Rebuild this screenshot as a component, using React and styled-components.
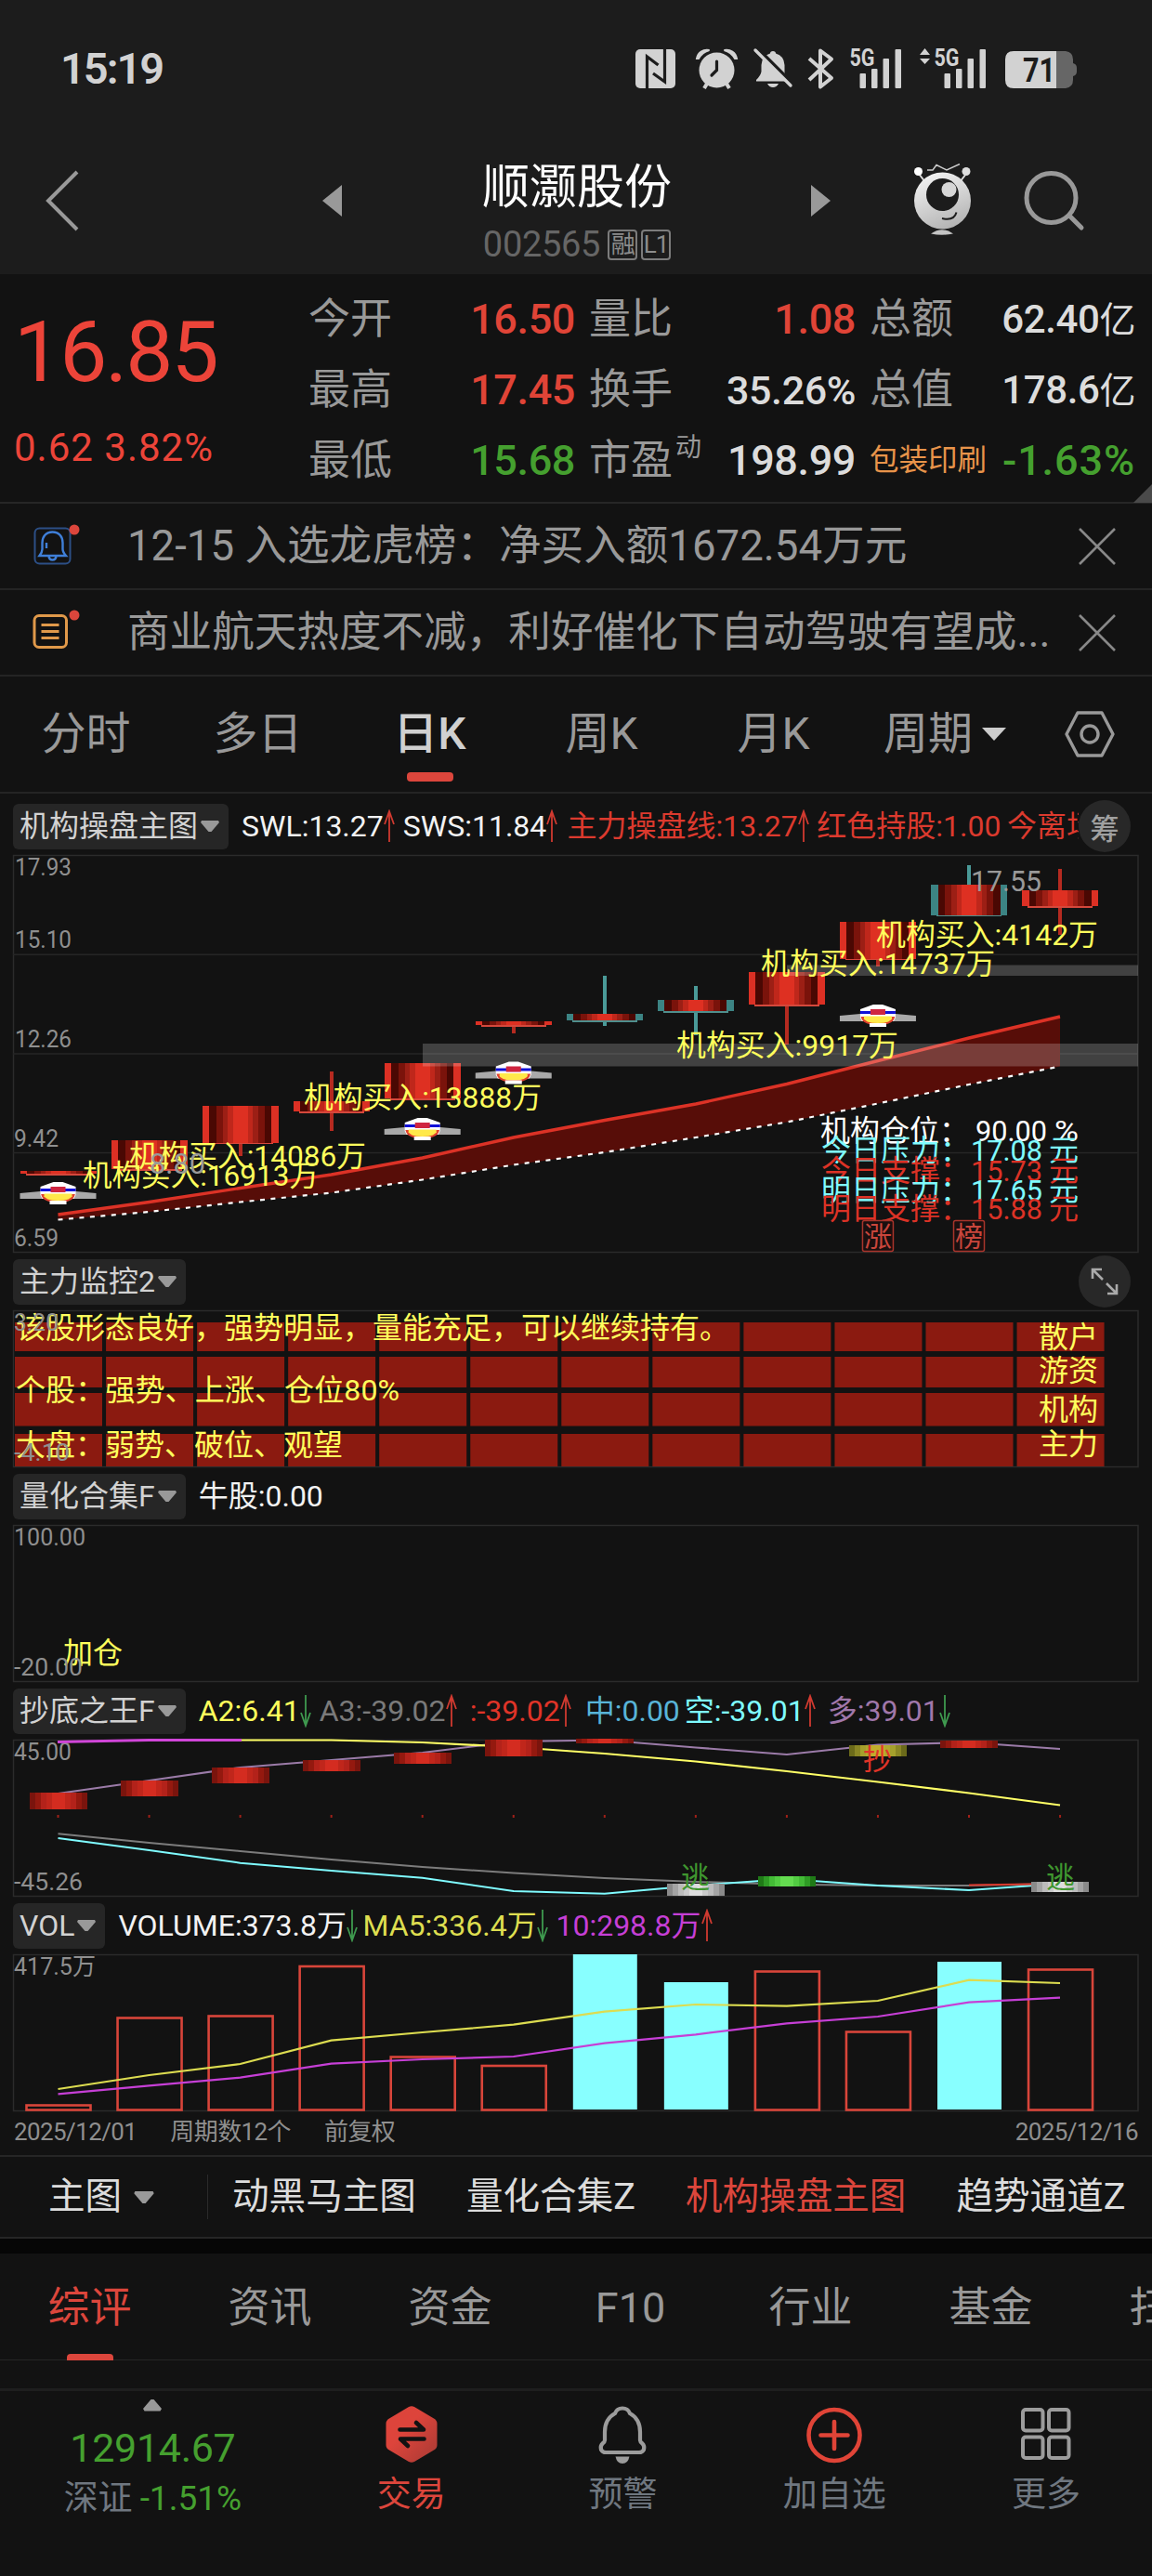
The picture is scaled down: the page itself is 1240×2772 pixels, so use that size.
import React from "react";
import styled, { createGlobalStyle } from "styled-components";

const RED = "#e04437";
const GREEN = "#45a02f";
const GREY = "#999999";
const LIGHT = "#dcdcdc";
const YELLOW = "#ffff5c";
const CYAN = "#7ffbff";

// x position of every trading day, shared by all panels
const DAYS = Array.from({ length: 12 }, (_, i) => 62.5 + i * 98.05);

const points = (values) =>
  values.map((y, i) => `${DAYS[i].toFixed(1)},${y}`).join(" ");

const quotes = [
  ["今开", "16.50", RED, 45, "量比", "1.08", RED, 45, "总额", "62.40", "亿"],
  ["最高", "17.45", RED, 45, "换手", "35.26%", LIGHT, 43, "总值", "178.6", "亿"],
];

const Label = ({ x, y, w, size = 32, fill = YELLOW, children, ...rest }) => (
  <text
    x={x}
    y={y}
    fontSize={size}
    fill={fill}
    textLength={w}
    lengthAdjust="spacingAndGlyphs"
    {...rest}
  >
    {children}
  </text>
);

const Axis = (props) => <Label size={26} fill="#8f8f8f" {...props} />;

const Arrow = ({ down }) => (
  <svg width="12" height="36" viewBox="0 0 12 36" fill="none">
    <path
      d={down ? "M6 1V34M1 20L6 34L11 20" : "M6 35V2M1 16L6 2L11 16"}
      stroke={down ? "#3f9a4f" : "#d03a30"}
      strokeWidth="1.8"
    />
  </svg>
);

const Caret = ({ w = 22, h = 14, fill = GREY }) => (
  <svg width={w} height={h} viewBox="0 0 22 14">
    <path d="M2 1H20L21 3L12.5 13H9.5L1 3Z" fill={fill} />
  </svg>
);

const Close = () => (
  <svg width="40" height="40" viewBox="0 0 40 40">
    <path d="M1 1L39 39M39 1L1 39" stroke="#888" strokeWidth="2.6" />
  </svg>
);

const StatusIcons = () => (
  <svg width="500" height="90" viewBox="0 0 500 90" fill="#d2d2d2">
    <rect x="14" y="23" width="43" height="42" rx="5" />
    <path
      d="M26.5 65V31L38.500 40M45.500 23V58L33 49"
      fill="none"
      stroke="#1c1c1c"
      strokeWidth="3.2"
    />
    <circle cx="101.500" cy="45.500" r="19" />
    <path d="M80 33A11 11 0 0 1 93.500 24Q86 26 82 33ZM123 33A11 11 0 0 0 109.500 24Q117 26 121 33Z" stroke="#d2d2d2" strokeWidth="2" />
    <path d="M91 60L88 65M112 60L115 65" stroke="#d2d2d2" strokeWidth="4" />
    <path
      d="M101.500 36V45.500L96 51"
      fill="none"
      stroke="#1c1c1c"
      strokeWidth="3.2"
      strokeLinecap="round"
    />
    <path d="M162 25Q165 25 165 27.500Q174 30 174.500 40V49Q175 52 180 56V57.500H144V56Q149 51 149.500 47V40Q150 30 159 27.500Q159 25 162 25ZM156 60H168Q166 64 162 64Q158 64 156 60Z" />
    <path d="M145 22L186 63" stroke="#1c1c1c" strokeWidth="4" />
    <path d="M143 24L181 62" stroke="#d2d2d2" strokeWidth="3.4" strokeLinecap="round" />
    <path
      d="M201 33L225 54L213 63.500V24.500L225 33.500L201 56"
      fill="none"
      stroke="#d2d2d2"
      strokeWidth="4"
      strokeLinejoin="round"
    />
    <text x="244.500" y="40.500" fontSize="25" fontWeight="700" textLength="27" lengthAdjust="spacingAndGlyphs">5G</text>
    <text x="335.500" y="40.500" fontSize="25" fontWeight="700" textLength="27" lengthAdjust="spacingAndGlyphs">5G</text>
    {[0, 91].map((dx) => (
      <g key={dx}>
        <rect x={255.5 + dx} y="49" width="6.500" height="16" rx="1" />
        <rect x={268 + dx} y="44" width="6.500" height="21" rx="1" />
        <rect x={280.5 + dx} y="33" width="6.500" height="32" rx="1" />
        <rect x={293.5 + dx} y="23" width="6.500" height="42" rx="1" />
      </g>
    ))}
    <path d="M325.500 22L331 29H320ZM325.500 39L331 33H320Z" />
    <path d="M467 25H477Q485 26 485 34V38Q489 39 489 43V47Q489 51 485 52V56Q485 64 477 65H467Z" fill="#666" />
    <path d="M421 25H467V65H421Q412 65 412 56V34Q412 25 421 25Z" />
    <text x="431" y="58" fontSize="37" fontWeight="700" fill="#1c1c1c" textLength="35" lengthAdjust="spacingAndGlyphs">71</text>
  </svg>
);

const Robot = () => (
  <svg width="64" height="80" viewBox="0 0 64 80">
    <defs>
      <linearGradient id="shell" x1="0.200" y1="0" x2="0.600" y2="1">
        <stop offset="0" stopColor="#f4f4f4" />
        <stop offset="1" stopColor="#b4b4b4" />
      </linearGradient>
    </defs>
    <path d="M6 11L13 20M57 11L50 20" stroke="#ddd" strokeWidth="2" />
    <circle cx="5.500" cy="8.500" r="4.500" fill="#fff" />
    <circle cx="57" cy="8.500" r="4.500" fill="#ddd" />
    <path d="M15 7H21L25 1.500L36 7L50 0.500" fill="none" stroke="#ccc" strokeWidth="1.500" />
    <circle cx="31.500" cy="40" r="30.500" fill="url(#shell)" />
    <circle cx="31.500" cy="33.500" r="17.500" fill="#1c1c1c" />
    <circle cx="38.500" cy="28" r="8" fill="#d6d6d6" />
    <path d="M31 59Q44 62 46.500 52.500" fill="none" stroke="#1c1c1c" strokeWidth="2" />
    <path d="M19 75.500Q31 67 43 75.500Q31 78 19 75.500Z" fill="#c4c4c4" />
  </svg>
);

const STRIPES = [
  [26, 7.5, "#4a0803"],
  [19, 7, "#7a130b"],
  [13.5, 5.5, "#9c1f15"],
  [8, 5.5, "#bf271b"],
];

const Candle = ({ x, top, bottom, high, low, teal }) => {
  const edge = teal ? "#3c8484" : "#dc3024";
  const h = bottom - top;
  return (
    <g shapeRendering="crispEdges">
      {(high || low) && (
        <rect
          x={x - 2}
          y={high || top}
          width="4"
          height={(low || bottom) - (high || top)}
          fill={teal ? "#4a9a98" : "#b52a20"}
        />
      )}
      <rect x={x - 41} y={top} width="82" height={h} fill={edge} />
      {STRIPES.map(([off, w, fill]) => (
        <React.Fragment key={off}>
          <rect x={x + off} y={top} width={w} height={h} fill={fill} />
          <rect x={x - off - w} y={top} width={w} height={h} fill={fill} />
        </React.Fragment>
      ))}
      <rect x={x - 8} y={top} width="16" height={h} fill="#de3022" />
      <rect x={x - 35} y={bottom} width="70" height="1.500" fill={teal ? "#4f8f8d" : "#d5483c"} />
    </g>
  );
};

const Saucer = ({ x, y }) => (
  <g>
    <path d={`M${x - 41} ${y + 12}L${x - 19} ${y + 10}H${x + 19}L${x + 41} ${y + 12}V${y + 18}H${x - 41}Z`} fill="#a9a9a9" />
    <path d={`M${x - 5} ${y}H${x + 5}L${x + 19} ${y + 5}V${y + 14}L${x + 17} ${y + 18}H${x - 17}L${x - 19} ${y + 14}V${y + 5}Z`} fill="#fff" />
    <rect x={x - 19} y={y + 7} width="38" height="3" fill="#1010d8" />
    <rect x={x - 8} y={y + 5} width="16" height="6" fill="#cf2540" />
    <path d={`M${x - 17} ${y + 14}H${x + 17}Q${x + 15} ${y + 21} ${x} ${y + 21}Q${x - 15} ${y + 21} ${x - 17} ${y + 14}Z`} fill="#ffe94a" stroke="#e0402c" strokeWidth="2" />
    <path d={`M${x - 15} ${y + 14}H${x + 15}`} stroke="#ffe94a" strokeWidth="3" />
    <rect x={x - 9} y={y + 20} width="18" height="4" fill="#fff" />
  </g>
);

const candles = [
  { top: 1260, bottom: 1263 },
  { top: 1226.5, bottom: 1258 },
  { top: 1190, bottom: 1229.5, low: 1244 },
  { top: 1185, bottom: 1196, high: 1153, low: 1217 },
  { top: 1144, bottom: 1182 },
  { top: 1099, bottom: 1103, low: 1112 },
  { top: 1091, bottom: 1098, high: 1050, low: 1104, teal: true },
  { top: 1076, bottom: 1088, high: 1061, low: 1114, teal: true },
  { top: 1046, bottom: 1081, low: 1124 },
  { top: 992, bottom: 1031.5, low: 1040 },
  { top: 952, bottom: 984.5, high: 931, low: 986, teal: true },
  { top: 958, bottom: 975, high: 935, low: 1006 },
];

const FAST = [1307, 1293.5, 1278.5, 1264, 1246, 1224, 1205.5, 1188, 1166.5, 1141.5, 1117, 1094];
const SLOW = [1312.5, 1304, 1293.5, 1283.5, 1269.5, 1253.5, 1240, 1224, 1207.5, 1187.5, 1167, 1147.5];

const MainChart = () => (
  <Chart $h={428} viewBox="14 920 1212 428">
    <rect x="14.500" y="920.500" width="1210.500" height="427" fill="none" stroke="#2b2b2b" strokeWidth="1.500" />
    {[1027.3, 1134, 1240.5].map((y) => (
      <path key={y} d={`M14 ${y}H1225`} stroke="#262626" strokeWidth="1.500" />
    ))}
    <Axis x={16} y={942} w={61}>17.93</Axis>
    <Axis x={16} y={1020} w={61}>15.10</Axis>
    <Axis x={16} y={1127} w={61}>12.26</Axis>
    <Axis x={15} y={1233.5} w={48}>9.42</Axis>
    <Axis x={15} y={1340.5} w={48}>6.59</Axis>

    <polygon points={`${points(FAST)} ${points(SLOW).split(" ").reverse().join(" ")}`} fill="#570d08" />
    {candles.map((c, i) => (
      <Candle key={i} x={DAYS[i]} {...c} />
    ))}
    <polyline points={points(FAST)} fill="none" stroke="#dc3226" strokeWidth="3.400" />
    <polyline points={points(SLOW)} fill="none" stroke="#fff" strokeWidth="2.200" strokeDasharray="5 6.500" />
    <rect x="847" y="1038.500" width="378" height="11.500" fill="#fff" opacity="0.200" />
    <rect x="455" y="1123" width="770" height="24.500" fill="#fff" opacity="0.200" />
    <Saucer x={DAYS[0]} y={1272} />
    <Saucer x={DAYS[4]} y={1203} />
    <Saucer x={DAYS[5]} y={1142.5} />
    <Saucer x={DAYS[9]} y={1081} />

    <Label x={139} y={1254.5} w={255}>机构买入:14086万</Label>
    <Label x={89} y={1275.5} w={254}>机构买入:16913万</Label>
    <Label x={327} y={1191.5} w={256}>机构买入:13888万</Label>
    <Label x={943} y={1016.5} w={239}>机构买入:4142万</Label>
    <Label x={819} y={1048} w={252}>机构买入:14737万</Label>
    <Label x={728} y={1135.5} w={239}>机构买入:9917万</Label>
    <Label x={161} y={1263} w={60} fill="#999">8.80</Label>
    <Label x={1045} y={959} w={76} fill="#999">17.55</Label>

    <Label x={883} y={1228} w={160} fill="#fff">机构仓位：</Label>
    <Label x={1050} y={1228} w={77} fill="#fff">90.00</Label>
    <Label x={1135} y={1228} w={26} fill="#fff">%</Label>
    {[
      ["今日压力：", "17.08", 1249, CYAN],
      ["今日支撑：", "15.73", 1270.5, "#dc3226"],
      ["明日压力：", "17.65", 1291.5, CYAN],
      ["明日支撑：", "15.88", 1312, "#dc3226"],
    ].map(([name, price, y, fill]) => (
      <g key={name}>
        <Label x={884} y={y} w={160} fill={fill}>{name}</Label>
        <Label x={1045} y={y} w={77} fill={fill}>{price}</Label>
        <Label x={1129} y={y} w={32} fill={fill}>元</Label>
      </g>
    ))}
    {[["涨", DAYS[9]], ["榜", DAYS[10]]].map(([mark, x]) => (
      <g key={mark}>
        <rect x={x - 16.5} y="1313.500" width="33" height="33" rx="2" fill="#1a0f0f" stroke="#a8342b" strokeWidth="1.500" />
        <Label x={x - 15} y={1341} size={30} w={30} fill="#c9463c">{mark}</Label>
      </g>
    ))}
  </Chart>
);

const ForceChart = () => (
  <Chart $h={169} viewBox="14 1410 1212 169">
    <rect x="14.500" y="1410.500" width="1210.500" height="168" fill="none" stroke="#2b2b2b" strokeWidth="1.500" />
    {[[1423, 31], [1460, 33], [1499, 35.5], [1543, 35]].map(([y, h]) =>
      DAYS.map((x) => (
        <rect key={`${y}-${x}`} x={x - 46.5} y={y} width="94" height={h} fill="#8b1a10" />
      ))
    )}
    <Label x={17} y={1439.5} w={768}>该股形态良好，强势明显，量能充足，可以继续持有。</Label>
    <Label x={17} y={1507} w={413}>个股：强势、上涨、仓位80%</Label>
    <Label x={17} y={1566} w={352}>大盘：弱势、破位、观望</Label>
    <Label x={1118} y={1450} w={64}>散户</Label>
    <Label x={1118} y={1486} w={64}>游资</Label>
    <Label x={1118} y={1528} w={64}>机构</Label>
    <Label x={1118} y={1565} w={64}>主力</Label>
    <Axis x={15} y={1432} w={48}>3.20</Axis>
    <Axis x={15} y={1571.5} w={60}>-4.10</Axis>
  </Chart>
);

const QuantChart = () => (
  <Chart $h={169} viewBox="14 1641 1212 169">
    <rect x="14.500" y="1641.500" width="1210.500" height="168" fill="none" stroke="#2b2b2b" strokeWidth="1.500" />
    <Label x={68} y={1790} w={64}>加仓</Label>
    <Axis x={15} y={1662.5} w={77}>100.00</Axis>
    <Axis x={15} y={1802.5} w={74}>-20.00</Axis>
  </Chart>
);

const TONES = {
  red: ["#7a140d", "#94190f", "#b3221a", "#c0261b", "#d42c20"],
  olive: ["#6b6a1a", "#8a8624", "#a5a02c", "#b0a82c", "#c2ae2c"],
  green: ["#1f7a17", "#2f9c25", "#43bb36", "#52cc42", "#64dc50"],
  grey: ["#8a8a8a", "#a4a4a4", "#bcbcbc", "#cacaca", "#dedede"],
};

const Block = ({ x, top, bottom, tone = "red" }) => (
  <g shapeRendering="crispEdges">
    {[31, 25, 19, 13, 7].map((half, i) => (
      <rect key={half} x={x - half} y={top} width={half * 2} height={bottom - top} fill={TONES[tone][i]} />
    ))}
  </g>
);

const BottomChart = () => (
  <Chart $h={169} viewBox="14 1872 1212 169">
    <rect x="14.500" y="1872.500" width="1210.500" height="168" fill="none" stroke="#2b2b2b" strokeWidth="1.500" />
    <Axis x={15} y={1894} w={62}>45.00</Axis>
    <Axis x={15} y={2034} w={74}>-45.26</Axis>
    <polyline points={points([1930, 1916, 1902, 1894, 1886, 1874, 1872.5, 1880.5, 1888, 1877.5, 1875, 1882])} fill="none" stroke="#9b7ba8" strokeWidth="2.200" />
    <polyline points={`260,1872.500 ${points([0, 0, 0, 1872.5, 1875, 1880, 1887, 1895.5, 1906, 1917.5, 1929.5, 1942.5]).split(" ").slice(3).join(" ")}`} fill="none" stroke="#ffff66" strokeWidth="2.200" />
    <polyline points="62,1874.500 160,1872.500 260,1872.500" fill="none" stroke="#d045d8" strokeWidth="3" />
    <polyline points={points([1973.3, 1983, 1992, 2001, 2009, 2015.5, 2021, 2025, 2027.7, 2029, 2029, 2027])} fill="none" stroke="#7c7c7c" strokeWidth="2" />
    <polyline points={points([1978, 1991, 2004.7, 2013, 2020.7, 2035, 2037.7, 2029, 2022, 2029, 2034, 2027])} fill="none" stroke={CYAN} strokeWidth="2" />
    <path d={`M${DAYS[10]} 2028.500L${DAYS[11]} 2027`} stroke="#d8382c" strokeWidth="2.200" />
    {DAYS.map((x) => (
      <rect key={x} x={x - 1} y="1953" width="2" height="3" fill="#a02018" />
    ))}
    <Block x={DAYS[0]} top={1929} bottom={1947} />
    <Block x={DAYS[1]} top={1916} bottom={1933} />
    <Block x={DAYS[2]} top={1902} bottom={1919} />
    <Block x={DAYS[3]} top={1894} bottom={1906} />
    <Block x={DAYS[4]} top={1886} bottom={1898} />
    <Block x={DAYS[5]} top={1872} bottom={1890} />
    <Block x={DAYS[6]} top={1871} bottom={1876} />
    <Block x={DAYS[7]} top={2027} bottom={2040} tone="grey" />
    <Block x={DAYS[8]} top={2019} bottom={2030} tone="green" />
    <Block x={DAYS[9]} top={1878} bottom={1890} tone="olive" />
    <Block x={DAYS[10]} top={1873} bottom={1881} />
    <Block x={DAYS[11]} top={2025} bottom={2036} tone="grey" />
    <Label x={929} y={1903.5} size={31} w={31} fill="#e03428">抄</Label>
    <Label x={733} y={2030.5} size={31} w={31} fill="#3f962f">逃</Label>
    <Label x={1126} y={2030.5} size={31} w={31} fill="#3f962f">逃</Label>
  </Chart>
);

const VOLUMES = [2264.5, 2170.5, 2168.5, 2115, 2212.5, 2222, 2103, 2133, 2120.5, 2185.5, 2111, 2118.5];
const FALLING = [6, 7, 10];

const VolumeChart = () => (
  <Chart $h={169} viewBox="14 2103 1212 169">
    <rect x="14.500" y="2103.500" width="1210.500" height="168" fill="none" stroke="#2b2b2b" strokeWidth="1.500" />
    <Axis x={15} y={2125} w={88}>417.5万</Axis>
    {VOLUMES.map((top, i) =>
      FALLING.includes(i) ? (
        <rect key={i} x={DAYS[i] - 34} y={top} width="69" height={2270 - top} fill="#88ffff" />
      ) : (
        <rect key={i} x={DAYS[i] - 34} y={top + 1} width="69" height={2269.5 - top} fill="none" stroke="#d8453a" strokeWidth="2.600" />
      )
    )}
    <polyline points={points([2248, 2233, 2221, 2195.7, 2187, 2178.7, 2164.7, 2157, 2158.7, 2153, 2130.7, 2134])} fill="none" stroke="#dcdc50" strokeWidth="2.200" />
    <polyline points={points([2253.3, 2244.3, 2235.7, 2220.7, 2216, 2213, 2198.7, 2189.3, 2177.3, 2170, 2154.7, 2149.7])} fill="none" stroke="#c63fd6" strokeWidth="2.200" />
  </Chart>
);

const Indicator = ({ name, children }) => (
  <IndicatorRow>
    <Chip>
      {name}
      <Caret />
    </Chip>
    {children}
  </IndicatorRow>
);

const App = () => (
  <>
    <GlobalStyle />
    <Page>
      <StatusBar>
        <Clock>15:19</Clock>
        <StatusIcons />
      </StatusBar>
      <TitleBar>
        <BackButton>
          <svg width="36" height="66" viewBox="0 0 36 66" fill="none">
            <path d="M34 2L3 33L34 64" stroke="#999" strokeWidth="4" />
          </svg>
        </BackButton>
        <svg width="22" height="34" viewBox="0 0 22 34">
          <path d="M0 17L21 0V34Z" fill="#999" />
        </svg>
        <StockTitle>
          <h1>顺灏股份</h1>
          <StockCode>
            002565
            <Badge>融</Badge>
            <Badge>L1</Badge>
          </StockCode>
        </StockTitle>
        <svg width="22" height="34" viewBox="0 0 22 34">
          <path d="M21 17L0 0V34Z" fill="#999" />
        </svg>
        <TitleActions>
          <Robot />
          <svg width="66" height="68" viewBox="0 0 66 68" fill="none">
            <circle cx="29.500" cy="31" r="26.500" stroke="#999" strokeWidth="5" />
            <path d="M49 50L62 63" stroke="#999" strokeWidth="5" strokeLinecap="round" />
          </svg>
        </TitleActions>
      </TitleBar>

      <QuotePanel>
        <PriceBox>
          <Price>16.85</Price>
          <Change>0.62 3.82%</Change>
        </PriceBox>
        <QuoteGrid>
          {quotes.map((q) => (
            <React.Fragment key={q[0]}>
              <Name>{q[0]}</Name>
              <Value $color={q[2]} $size={q[3]}>{q[1]}</Value>
              <Name $inset>{q[4]}</Name>
              <Value $color={q[6]} $size={q[7]}>{q[5]}</Value>
              <Name $inset>{q[8]}</Name>
              <Value $color={LIGHT} $size={42}>
                {q[9]}
                <small>{q[10]}</small>
              </Value>
            </React.Fragment>
          ))}
          <Name>最低</Name>
          <Value $color={GREEN} $size={45}>15.68</Value>
          <Name $inset>
            市盈<Sup>动</Sup>
          </Name>
          <Value $color={LIGHT} $size={45}>198.99</Value>
          <Sector $inset>包装印刷</Sector>
          <Value $color={GREEN} $size={45} $spacing={0.9}>-1.63%</Value>
        </QuoteGrid>
        <Corner />
      </QuotePanel>

      <NewsRow>
        <NewsIcon>
          <svg width="50" height="50" viewBox="0 0 50 50" fill="none">
            <rect x="5.500" y="8.500" width="38" height="38" rx="5" stroke="#2c4f86" strokeWidth="2" />
            <path d="M24.500 12.500C17 12.500 13.500 18 13.500 24V31Q13.500 34 10.500 38H39Q35.500 34 35.500 31V24C35.500 18 32 12.500 24.500 12.500ZM20.500 38.500Q21 42.500 24.500 42.500Q28 42.500 28.500 38.500M18 24V30" stroke="#3f7fd8" strokeWidth="2.400" />
            <circle cx="48" cy="10" r="5.500" fill="#dc463c" />
          </svg>
        </NewsIcon>
        <NewsText>12-15 入选龙虎榜：净买入额1672.54万元</NewsText>
        <Close />
      </NewsRow>
      <NewsRow>
        <NewsIcon>
          <svg width="50" height="50" viewBox="0 0 50 50" fill="none">
            <rect x="5" y="9.500" width="34.500" height="34" rx="5" stroke="#e0994a" strokeWidth="3" />
            <path d="M12.500 19.500H31.500M12.500 26.500H31.500M12.500 33.500H31.500" stroke="#e0994a" strokeWidth="2.800" />
            <circle cx="48" cy="9" r="5.500" fill="#dc463c" />
          </svg>
        </NewsIcon>
        <NewsText>商业航天热度不减，利好催化下自动驾驶有望成...</NewsText>
        <Close />
      </NewsRow>

      <PeriodTabs>
        <PeriodTab>分时</PeriodTab>
        <PeriodTab>多日</PeriodTab>
        <PeriodTab $active>日K</PeriodTab>
        <PeriodTab>周K</PeriodTab>
        <PeriodTab>月K</PeriodTab>
        <PeriodTab>
          周期
          <svg width="28" height="16" viewBox="0 0 28 16">
            <path d="M1 1H27L14 15Z" fill="#ccc" />
          </svg>
        </PeriodTab>
        <Settings width="54" height="50" viewBox="0 0 54 50" fill="none" stroke="#999">
          <path d="M14 2H40L52 25L40 48H14L2 25Z" strokeWidth="3.400" strokeLinejoin="round" />
          <circle cx="27" cy="25" r="9" strokeWidth="3.400" />
        </Settings>
      </PeriodTabs>

      <Indicator name="机构操盘主图">
        <Reading $w={174} $color="#f2f2f2">SWL:13.27<Arrow /></Reading>
        <Reading $w={177} $color="#f2f2f2">SWS:11.84<Arrow /></Reading>
        <Reading $w={269} $color="#dc3a2e">主力操盘线:13.27<Arrow /></Reading>
        <Reading $w={205} $color="#dc3a2e">红色持股:1.00</Reading>
        <Reading $w={77} $color="#dc3a2e">今离场</Reading>
        <RoundButton>筹</RoundButton>
      </Indicator>
      <MainChart />

      <Indicator name="主力监控2">
        <RoundButton>
          <svg width="30" height="30" viewBox="0 0 30 30" fill="none" stroke="#aaa" strokeWidth="2.600">
            <path d="M2 12V2H12M2 2L13 13M28 18V28H18M28 28L17 17" />
          </svg>
        </RoundButton>
      </Indicator>
      <ForceChart />

      <Indicator name="量化合集F">
        <Reading $w={200} $color="#f2f2f2">牛股:0.00</Reading>
      </Indicator>
      <QuantChart />

      <Indicator name="抄底之王F">
        <Reading $w={130} $color={YELLOW}>A2:6.41<Arrow down /></Reading>
        <Reading $w={162} $color="#7a7a7a">A3:-39.02<Arrow /></Reading>
        <Reading $w={124} $color="#e03428">:-39.02<Arrow /></Reading>
        <Reading $w={107} $color="#58b4d8">中:0.00</Reading>
        <Reading $w={154} $color={CYAN}>空:-39.01<Arrow /></Reading>
        <Reading $w={140} $color="#a077aa">多:39.01<Arrow down /></Reading>
      </Indicator>
      <BottomChart />

      <Indicator name="VOL">
        <Reading $w={263} $color="#f2f2f2">VOLUME:373.8万<Arrow down /></Reading>
        <Reading $w={208} $color="#dede50">MA5:336.4万<Arrow down /></Reading>
        <Reading $w={180} $color="#c63fd6">10:298.8万<Arrow /></Reading>
      </Indicator>
      <VolumeChart />
      <DateRow>
        <span>2025/12/01</span>
        <span>周期数12个</span>
        <span>前复权</span>
        <span>2025/12/16</span>
      </DateRow>

      <FormulaBar>
        <FormulaMenu>
          主图
          <Caret w={26} h={15} />
        </FormulaMenu>
        <Formula>动黑马主图</Formula>
        <Formula>量化合集Z</Formula>
        <Formula $active>机构操盘主图</Formula>
        <Formula>趋势通道Z</Formula>
      </FormulaBar>
      <Band />
      <InfoTabs>
        {["综评", "资讯", "资金", "F10", "行业", "基金", "扫雷"].map((tab, i) => (
          <InfoTab key={tab} $active={i === 0}>{tab}</InfoTab>
        ))}
      </InfoTabs>
      <Spacer />
      <BottomBar>
        <IndexBox>
          <svg width="22" height="14" viewBox="0 0 22 14">
            <path d="M9.500 1H12.500L21 11L19.500 13.500H2.500L1 11Z" fill="#999" />
          </svg>
          <IndexValue>12914.67</IndexValue>
          <IndexChange>
            深证<b>-1.51%</b>
          </IndexChange>
        </IndexBox>
        <NavItem $active>
          <svg width="56" height="64" viewBox="0 0 56 64">
            <defs>
              <linearGradient id="hex" x1="0" y1="0" x2="1" y2="1">
                <stop offset="0.400" stopColor="#dd443b" />
                <stop offset="1" stopColor="#a63a34" />
              </linearGradient>
            </defs>
            <path d="M25 2Q28 0.500 31 2L52 14.500Q55.500 16.500 55.500 20V43Q55.500 46.500 52 48.500L31 61Q28 62.500 25 61L4 48.500Q0.500 46.500 0.500 43V20Q0.500 16.500 4 14.500Z" fill="url(#hex)" />
            <path d="M15.500 26.500H41L33 19M41.500 36.500H16L24 44" fill="none" stroke="#121212" strokeWidth="4.600" strokeLinecap="round" strokeLinejoin="round" />
          </svg>
          交易
        </NavItem>
        <NavItem>
          <svg width="56" height="64" viewBox="0 0 56 64" fill="none" stroke="#9c9c9c" strokeWidth="4.200">
            <path d="M28 3.500Q34 3.500 36 9Q47 15 47 29V38Q47 39.500 49.500 41.500Q52 44 51 48Q49.500 51 46 51H10Q6.500 51 5 48Q4 44 6.500 41.500Q9 39.500 9 38V29Q9 15 20 9Q22 3.500 28 3.500Z" strokeLinejoin="round" />
            <path d="M20.500 55.500H35.500Q34 63 28 63Q22 63 20.500 55.500Z" fill="#9c9c9c" stroke="none" />
          </svg>
          预警
        </NavItem>
        <NavItem>
          <svg width="62" height="64" viewBox="0 0 62 64" fill="none" stroke={RED}>
            <circle cx="31" cy="32.500" r="27.500" strokeWidth="4.600" />
            <path d="M31 18V47M16.500 32.500H45.500" strokeWidth="4.600" strokeLinecap="round" />
          </svg>
          加自选
        </NavItem>
        <NavItem>
          <svg width="56" height="64" viewBox="0 0 56 64" fill="none" stroke="#9c9c9c" strokeWidth="4">
            <rect x="3" y="5" width="21.500" height="22.500" rx="3" />
            <rect x="31" y="5" width="21.500" height="22.500" rx="3" />
            <rect x="3" y="34.500" width="21.500" height="22.500" rx="3" />
            <rect x="31" y="34.500" width="21.500" height="22.500" rx="3" />
          </svg>
          更多
        </NavItem>
      </BottomBar>
    </Page>
  </>
);

const GlobalStyle = createGlobalStyle`
  * {
    box-sizing: border-box;
  }
  body {
    margin: 0;
    background: #121212;
    font-family: Roboto, "Noto Sans CJK SC", sans-serif;
  }
  svg {
    display: block;
    flex-shrink: 0;
  }
  h1 {
    margin: 0;
  }
`;

const Page = styled.div`
  width: 1240px;
  height: 2772px;
  overflow: hidden;
  display: flex;
  flex-direction: column;
  background: #121212;
  color: ${GREY};
  > * {
    flex-shrink: 0;
  }
`;

const StatusBar = styled.div`
  height: 150px;
  display: flex;
  align-items: flex-start;
  justify-content: space-between;
  padding: 30px 70px 0 65px;
  background: #1c1c1c;
`;

const Clock = styled.div`
  font-size: 47px;
  font-weight: 600;
  letter-spacing: -2px;
  line-height: 88px;
  color: #d2d2d2;
`;

const TitleBar = styled.div`
  height: 145px;
  display: flex;
  align-items: center;
  padding: 0 72px 13px 49px;
  background: #1c1c1c;
`;

const BackButton = styled.div`
  width: 298px;
`;

const StockTitle = styled.div`
  width: 504px;
  display: flex;
  flex-direction: column;
  align-items: center;
  padding-top: 32px;
  h1 {
    font-size: 51px;
    font-weight: 400;
    line-height: 62px;
    color: #fff;
  }
`;

const StockCode = styled.div`
  display: flex;
  align-items: center;
  gap: 4px;
  height: 60px;
  font-size: 38px;
  letter-spacing: -0.3px;
  line-height: 60px;
  color: #666;
`;

const Badge = styled.span`
  width: 32px;
  height: 33px;
  border: 2px solid #7c7c7c;
  border-radius: 4px;
  font-size: 26px;
  line-height: 29px;
  letter-spacing: -1px;
  text-align: center;
  color: #8c8c8c;
  &:first-of-type {
    margin-left: 4px;
  }
`;

const TitleActions = styled.div`
  flex: 1;
  display: flex;
  align-items: center;
  justify-content: space-between;
  padding-left: 88px;
`;

const QuotePanel = styled.div`
  position: relative;
  height: 247px;
  display: flex;
  border-bottom: 2px solid #262626;
`;

const PriceBox = styled.div`
  width: 332px;
  padding: 30px 0 0 15px;
  color: #ec4439;
  white-space: nowrap;
`;

const Price = styled.div`
  font-size: 91px;
  font-weight: 400;
  letter-spacing: -2px;
  line-height: 108px;
`;

const Change = styled.div`
  margin-top: 24px;
  font-size: 42px;
  letter-spacing: 1px;
  line-height: 50px;
`;

const QuoteGrid = styled.div`
  height: 240px;
  display: grid;
  grid-template-columns: 88px 199px 134px 168px 134px 167px;
  grid-template-rows: repeat(3, 76px);
  align-items: center;
  padding-top: 11px;
  font-size: 45px;
  line-height: 60px;
  white-space: nowrap;
`;

const Name = styled.span`
  padding-left: ${(p) => (p.$inset ? 15 : 0)}px;
`;

const Value = styled.span`
  text-align: right;
  font-size: ${(p) => p.$size}px;
  font-weight: 500;
  letter-spacing: ${(p) => p.$spacing || -0.4}px;
  color: ${(p) => p.$color};
  small {
    font-size: 39px;
    font-weight: 400;
  }
`;

const Sup = styled.sup`
  margin-left: 3px;
  font-size: 28px;
  line-height: 0;
  vertical-align: 20px;
`;

const Sector = styled(Name)`
  font-size: 31.5px;
  color: #e8944a;
`;

const Corner = styled.i`
  position: absolute;
  right: 0;
  bottom: -1px;
  border: 10px solid transparent;
  border-right-color: #4a4a4a;
  border-bottom-color: #4a4a4a;
`;

const NewsRow = styled.div`
  height: 93px;
  display: flex;
  align-items: center;
  padding: 0 39px 0 32px;
  border-bottom: 2px solid #242424;
`;

const NewsIcon = styled.div`
  width: 105px;
  padding-bottom: 6px;
  svg {
    overflow: visible;
  }
`;

const NewsText = styled.div`
  flex: 1;
  font-size: 45.6px;
  line-height: 60px;
  white-space: nowrap;
`;

const PeriodTabs = styled.div`
  height: 126px;
  display: flex;
  align-items: center;
  border-bottom: 2px solid #242424;
`;

const PeriodTab = styled.div`
  position: relative;
  width: 185px;
  display: flex;
  align-items: center;
  justify-content: center;
  gap: 9px;
  font-size: 48px;
  line-height: 60px;
  font-weight: ${(p) => (p.$active ? 500 : 400)};
  color: ${(p) => (p.$active ? "#d0d0d0" : GREY)};
  &::after {
    content: "";
    display: ${(p) => (p.$active ? "block" : "none")};
    position: absolute;
    left: calc(50% - 25px);
    top: 71px;
    width: 50px;
    height: 10px;
    border-radius: 4px;
    background: #dc463c;
  }
`;

const Settings = styled.svg`
  margin-left: 36px;
`;

const IndicatorRow = styled.div`
  height: 62px;
  display: flex;
  align-items: center;
  padding: 0 14px;
  ${PeriodTabs} + & {
    height: 66px;
    padding-top: 4px;
  }
`;

const Chip = styled.div`
  height: 49px;
  display: flex;
  align-items: center;
  gap: 2px;
  margin-right: 14px;
  padding: 0 9px 0 7px;
  border-radius: 6px;
  background: #262626;
  font-size: 32px;
  line-height: 49px;
  color: #d2d2d2;
  white-space: nowrap;
`;

const Reading = styled.div`
  width: ${(p) => p.$w}px;
  display: flex;
  align-items: center;
  overflow: hidden;
  font-size: 32px;
  line-height: 48px;
  color: ${(p) => p.$color};
  white-space: nowrap;
`;

const RoundButton = styled.div`
  width: 56px;
  height: 56px;
  display: flex;
  align-items: center;
  justify-content: center;
  margin: 0 9px 0 auto;
  flex-shrink: 0;
  border-radius: 50%;
  background: #282828;
  font-size: 31px;
  font-weight: 500;
  color: #a0a0a0;
`;

const Chart = styled.svg`
  width: 1212px;
  height: ${(p) => p.$h}px;
  margin-left: 14px;
  overflow: visible;
`;

const DateRow = styled.div`
  height: 47px;
  display: flex;
  align-items: center;
  padding: 0 15px 4px;
  font-size: 26px;
  letter-spacing: -0.6px;
  line-height: 30px;
  color: #8f8f8f;
  span + span {
    margin-left: 36px;
  }
  span:last-child {
    margin-left: auto;
  }
`;

const FormulaBar = styled.div`
  height: 90px;
  display: flex;
  align-items: center;
  border-top: 2px solid #262626;
  border-bottom: 2px solid #262626;
  font-size: 39.6px;
  line-height: 50px;
  color: #dcdcdc;
  white-space: nowrap;
`;

const FormulaMenu = styled.div`
  width: 224px;
  height: 48px;
  display: flex;
  align-items: center;
  gap: 11px;
  flex-shrink: 0;
  margin-right: 26px;
  padding-left: 52px;
  border-right: 1px solid #2a2a2a;
`;

const Formula = styled.div`
  flex-shrink: 0;
  margin-right: 54px;
  color: ${(p) => (p.$active ? "#dc463c" : "inherit")};
`;

const Band = styled.div`
  height: 16px;
  background: #060606;
`;

const InfoTabs = styled.div`
  height: 115px;
  display: flex;
  border-bottom: 1px solid #262626;
`;

const InfoTab = styled.div`
  position: relative;
  width: 194px;
  flex-shrink: 0;
  padding-right: 1px;
  text-align: center;
  font-size: 45px;
  line-height: 118px;
  color: ${(p) => (p.$active ? "#dc463c" : GREY)};
  &::after {
    content: "";
    display: ${(p) => (p.$active ? "block" : "none")};
    position: absolute;
    left: 72px;
    bottom: -1px;
    width: 50px;
    height: 7px;
    border-radius: 4px 4px 0 0;
    background: #dc463c;
  }
`;

const Spacer = styled.div`
  height: 30px;
`;

const BottomBar = styled.div`
  flex: 1;
  display: flex;
  border-top: 3px solid #1e1e1e;
`;

const IndexBox = styled.div`
  width: 329px;
  display: flex;
  flex-direction: column;
  align-items: center;
  padding: 8px 0 0 0;
`;

const IndexValue = styled.div`
  margin-top: 14px;
  font-size: 43px;
  line-height: 50px;
  letter-spacing: -0.3px;
  color: ${GREEN};
`;

const IndexChange = styled.div`
  margin-top: 7px;
  font-size: 37px;
  line-height: 46px;
  color: #6f7780;
  b {
    margin-left: 8px;
    font-weight: 400;
    color: ${GREEN};
  }
`;

const NavItem = styled.div`
  width: 228px;
  display: flex;
  flex-direction: column;
  align-items: center;
  gap: 8px;
  padding-top: 15px;
  font-size: 37px;
  line-height: 50px;
  color: ${(p) => (p.$active ? "#dc463c" : "#6f7780")};
`;

export default App;
